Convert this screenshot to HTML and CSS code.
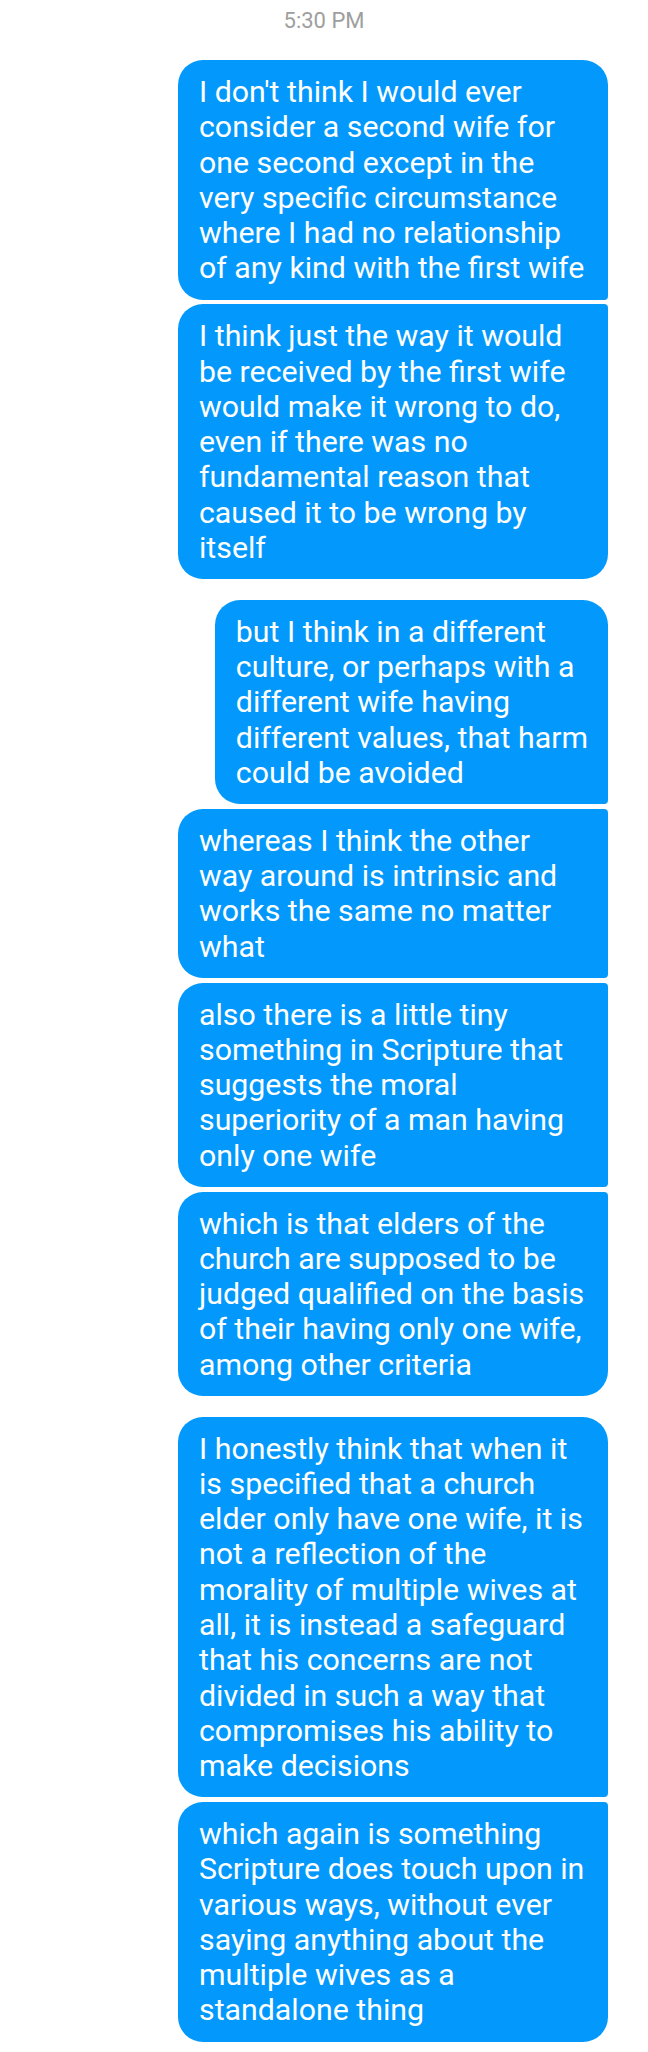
FILE: index.html
```html
<!DOCTYPE html>
<html lang="en">
<head>
<meta charset="utf-8">
<title>Messages</title>
<link rel="stylesheet" href="styles.css">
</head>
<body>
<main class="thread">
  <div class="timestamp">5:30 PM</div>
  <div class="messages">
    <div class="bubble wide first">I don't think I would ever<br>consider a second wife for<br>one second except in the<br>very specific circumstance<br>where I had no relationship<br>of any kind with the first wife</div>
    <div class="bubble wide last">I think just the way it would<br>be received by the first wife<br>would make it wrong to do,<br>even if there was no<br>fundamental reason that<br>caused it to be wrong by<br>itself</div>
    <div class="bubble first group-gap">but I think in a different<br>culture, or perhaps with a<br>different wife having<br>different values, that harm<br>could be avoided</div>
    <div class="bubble wide middle">whereas I think the other<br>way around is intrinsic and<br>works the same no matter<br>what</div>
    <div class="bubble wide middle">also there is a little tiny<br>something in Scripture that<br>suggests the moral<br>superiority of a man having<br>only one wife</div>
    <div class="bubble wide last">which is that elders of the<br>church are supposed to be<br>judged qualified on the basis<br>of their having only one wife,<br>among other criteria</div>
    <div class="bubble wide first group-gap">I honestly think that when it<br>is specified that a church<br>elder only have one wife, it is<br>not a reflection of the<br>morality of multiple wives at<br>all, it is instead a safeguard<br>that his concerns are not<br>divided in such a way that<br>compromises his ability to<br>make decisions</div>
    <div class="bubble wide last">which again is something<br>Scripture does touch upon in<br>various ways, without ever<br>saying anything about the<br>multiple wives as a<br>standalone thing</div>
  </div>
</main>
</body>
</html>
```

FILE: styles.css
```css
html, body {
  margin: 0;
  padding: 0;
  background: #ffffff;
}

body {
  font-family: Roboto, "Noto Sans", "Liberation Sans", sans-serif;
}

.thread {
  width: 648px;
  height: 2052px;
  overflow: hidden;
}

.timestamp {
  padding-top: 8px;
  padding-bottom: 27px;
  line-height: 25px;
  font-size: 22px;
  color: #9e9e9e;
  text-align: center;
}

.messages {
  display: flex;
  flex-direction: column;
  align-items: flex-end;
  gap: 4.5px;
  padding-right: 40px;
}

.bubble {
  box-sizing: border-box;
  background: #0399fc;
  color: #ffffff;
  font-size: 30.3px;
  line-height: 35.3px;
  padding: 14px 20px 14px 21px;
  white-space: nowrap;
  border-radius: 25px 4px 4px 25px;
}

.bubble.wide {
  width: 430px;
}

.bubble.first {
  border-radius: 25px 25px 4px 25px;
}

.bubble.last {
  border-radius: 25px 4px 25px 25px;
}

.bubble.middle {
  border-radius: 25px 4px 4px 25px;
}

.bubble.group-gap {
  margin-top: 16px;
}
```
